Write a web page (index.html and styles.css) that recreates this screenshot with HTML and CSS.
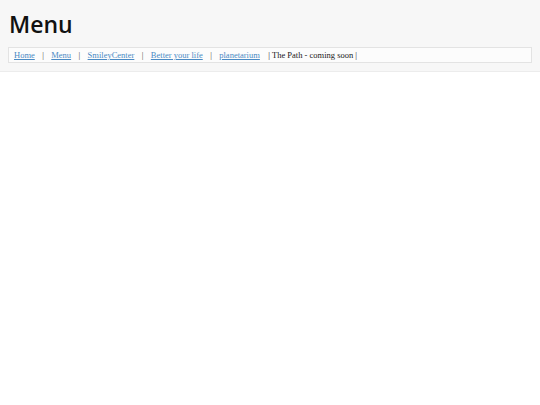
FILE: index.html
```html
<!DOCTYPE html>
<html>
<head>
<meta charset="utf-8">
<link rel="stylesheet" href="styles.css">
</head>
<body>
<header class="masthead">
  <h1 class="title">Menu</h1>
  <nav class="crumbs">
    <a href="#">Home</a><span class="sep">|</span><a href="#">Menu</a><span class="sep">|</span><a href="#">SmileyCenter</a><span class="sep">|</span><a href="#">Better your life</a><span class="sep">|</span><a href="#">planetarium</a><span class="tail">| The Path - coming soon |</span>
  </nav>
</header>
</body>
</html>
```
FILE: styles.css
```css
html, body {
  margin: 0;
  padding: 0;
  background: #ffffff;
}
.masthead {
  background: #f7f7f7;
  border-bottom: 1px solid #ececec;
  padding: 8px;
  height: 55px;
}
.title {
  margin: 0;
  font-family: "Open Sans", sans-serif;
  font-weight: 600;
  font-size: 23px;
  line-height: 32px;
  color: #111;
  padding-left: 1px;
}
.crumbs {
  margin-top: 7px;
  background: #fcfcfc;
  border: 1px solid #e3e3e3;
  height: 14px;
  padding: 0 5px;
  font-family: "Liberation Serif", Georgia, serif;
  font-size: 8.5px;
  line-height: 14px;
  color: #1a1a1a;
}
.crumbs a {
  color: #4a8ac4;
  text-decoration: underline;
}
.sep {
  color: #444;
  margin: 0 7.4px;
}
.tail {
  margin-left: 8.5px;
}
```
